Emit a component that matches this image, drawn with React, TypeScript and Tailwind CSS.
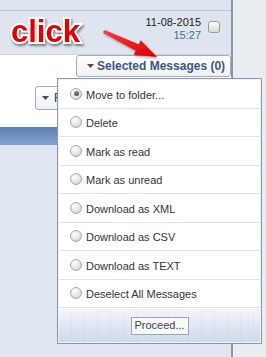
import React from 'react';

const items = [
  'Move to folder...',
  'Delete',
  'Mark as read',
  'Mark as unread',
  'Download as XML',
  'Download as CSV',
  'Download as TEXT',
  'Deselect All Messages',
];

const Caret = ({ className = '' }: { className?: string }) => (
  <svg width="7" height="4" viewBox="0 0 7 4" className={className}>
    <path d="M0 0 L7 0 L3.5 4 Z" fill="#4a4a4a" />
  </svg>
);

const Radio = ({ checked }: { checked?: boolean }) => (
  <span className="relative flex h-[12px] w-[12px] shrink-0 items-center justify-center rounded-full border border-[#a9a9a9] bg-[radial-gradient(circle_at_35%_30%,#ffffff,#e4e4e4_55%,#c4c4c4)]">
    {checked && (
      <span className="h-[5px] w-[5px] rounded-full bg-[radial-gradient(circle_at_40%_35%,#8a8a8a,#3c3c3c)]" />
    )}
  </span>
);

export default function App() {
  return (
    <div className="relative flex h-[357px] w-[266px] overflow-hidden font-['Liberation_Sans',Arial,sans-serif]">
      {/* message list panel */}
      <div className="flex w-[233px] shrink-0 flex-col border-r-2 border-[#8c96a4]">
        <div className="h-[11px] shrink-0 border-b border-[#b9c3d1] bg-[#dfe5ee]" />

        <div className="flex h-[44px] shrink-0 items-center justify-between border-b border-[#cfd6e0] bg-[#dee5ee]">
          <span className="-mt-[2px] pl-[11px] text-[31px] font-bold leading-none text-[#e30000] [-webkit-text-stroke:4px_white] [paint-order:stroke_fill] drop-shadow-[1px_2px_1px_rgba(0,0,0,0.45)]">
            click
          </span>
          <div className="flex items-start gap-[7px] self-start pr-[11px] pt-[5px]">
            <div className="flex flex-col items-end text-[11px] leading-[13px]">
              <span className="text-[#1a1a1a]">11-08-2015</span>
              <span className="text-[#4b6a93]">15:27</span>
            </div>
            <span className="mt-[5px] h-[12px] w-[12px] rounded-[3px] border border-[#9a9a9a] bg-[linear-gradient(#fdfdfd,#dadada)]" />
          </div>
        </div>

        <div className="flex h-[72px] shrink-0 flex-col bg-white">
          <div className="flex justify-end">
            <button className="flex h-[22px] w-[155px] items-center gap-[3px] rounded-[3px] border border-[#a3abb7] bg-[linear-gradient(#ffffff,#eef0f3)] pl-[10px] text-[12px] font-bold text-[#3b5683]">
              <Caret />
              Selected Messages (0)
            </button>
          </div>
          <div className="ml-[35px] mt-[9px] flex h-[24px] w-[60px] items-center gap-[5px] rounded-[3px] border border-[#a3abb7] bg-[linear-gradient(#ffffff,#eef0f3)] pl-[6px] text-[12px] text-[#333]">
            <Caret />
            Filter
          </div>
        </div>

        <div className="h-[18px] shrink-0 bg-[linear-gradient(#5a7db3,#87a4cc)]" />
        <div className="flex-1 bg-[#dfe6ef]" />
      </div>

      <div className="flex-1 bg-[#e9edf2]" />

      {/* annotation arrow */}
      <svg className="pointer-events-none absolute left-0 top-0" width="266" height="90" viewBox="0 0 266 90">
        <defs>
          <linearGradient id="arrowFill" x1="0" y1="0" x2="1" y2="1">
            <stop offset="0" stopColor="#ff3a3a" />
            <stop offset="1" stopColor="#d40000" />
          </linearGradient>
          <filter id="arrowShadow" x="-20%" y="-20%" width="140%" height="160%">
            <feDropShadow dx="1" dy="1.5" stdDeviation="1" floodColor="#000" floodOpacity="0.35" />
          </filter>
        </defs>
        <g filter="url(#arrowShadow)">
          <path
            d="M105.8 30.4 L138.7 44.35 L140.7 40.3 L157 57 L133.7 54.7 L135.7 50.65 L104.2 33.6 Z"
            fill="url(#arrowFill)"
          />
          <circle cx="105" cy="32" r="1.8" fill="#ff3a3a" />
        </g>
      </svg>

      {/* dropdown menu */}
      <div className="absolute left-[57px] top-[78px] flex w-[205px] flex-col border border-[#8a99ae] bg-[#eef1f5] p-[1px]">
        <div className="flex flex-col bg-white">
          {items.map((label, i) => (
            <div
              key={label}
              className="flex h-[28.5px] items-center gap-[4px] border-b border-[#dfe3e9] pl-[11px] text-[11px] text-[#333]"
            >
              <Radio checked={i === 0} />
              <span className="pt-[2px]">{label}</span>
            </div>
          ))}
        </div>
        <div className="flex h-[34px] items-center justify-center border-t border-white bg-[repeating-linear-gradient(90deg,transparent_0_12px,rgba(120,140,170,0.07)_12px_13px),linear-gradient(#f3f5f9,#cedaea)]">
          <button className="flex h-[18px] w-[58px] items-center justify-center border border-[#9aa3ae] bg-[#f6f8fb] text-[11px] text-[#444]">
            Proceed...
          </button>
        </div>
      </div>
    </div>
  );
}
